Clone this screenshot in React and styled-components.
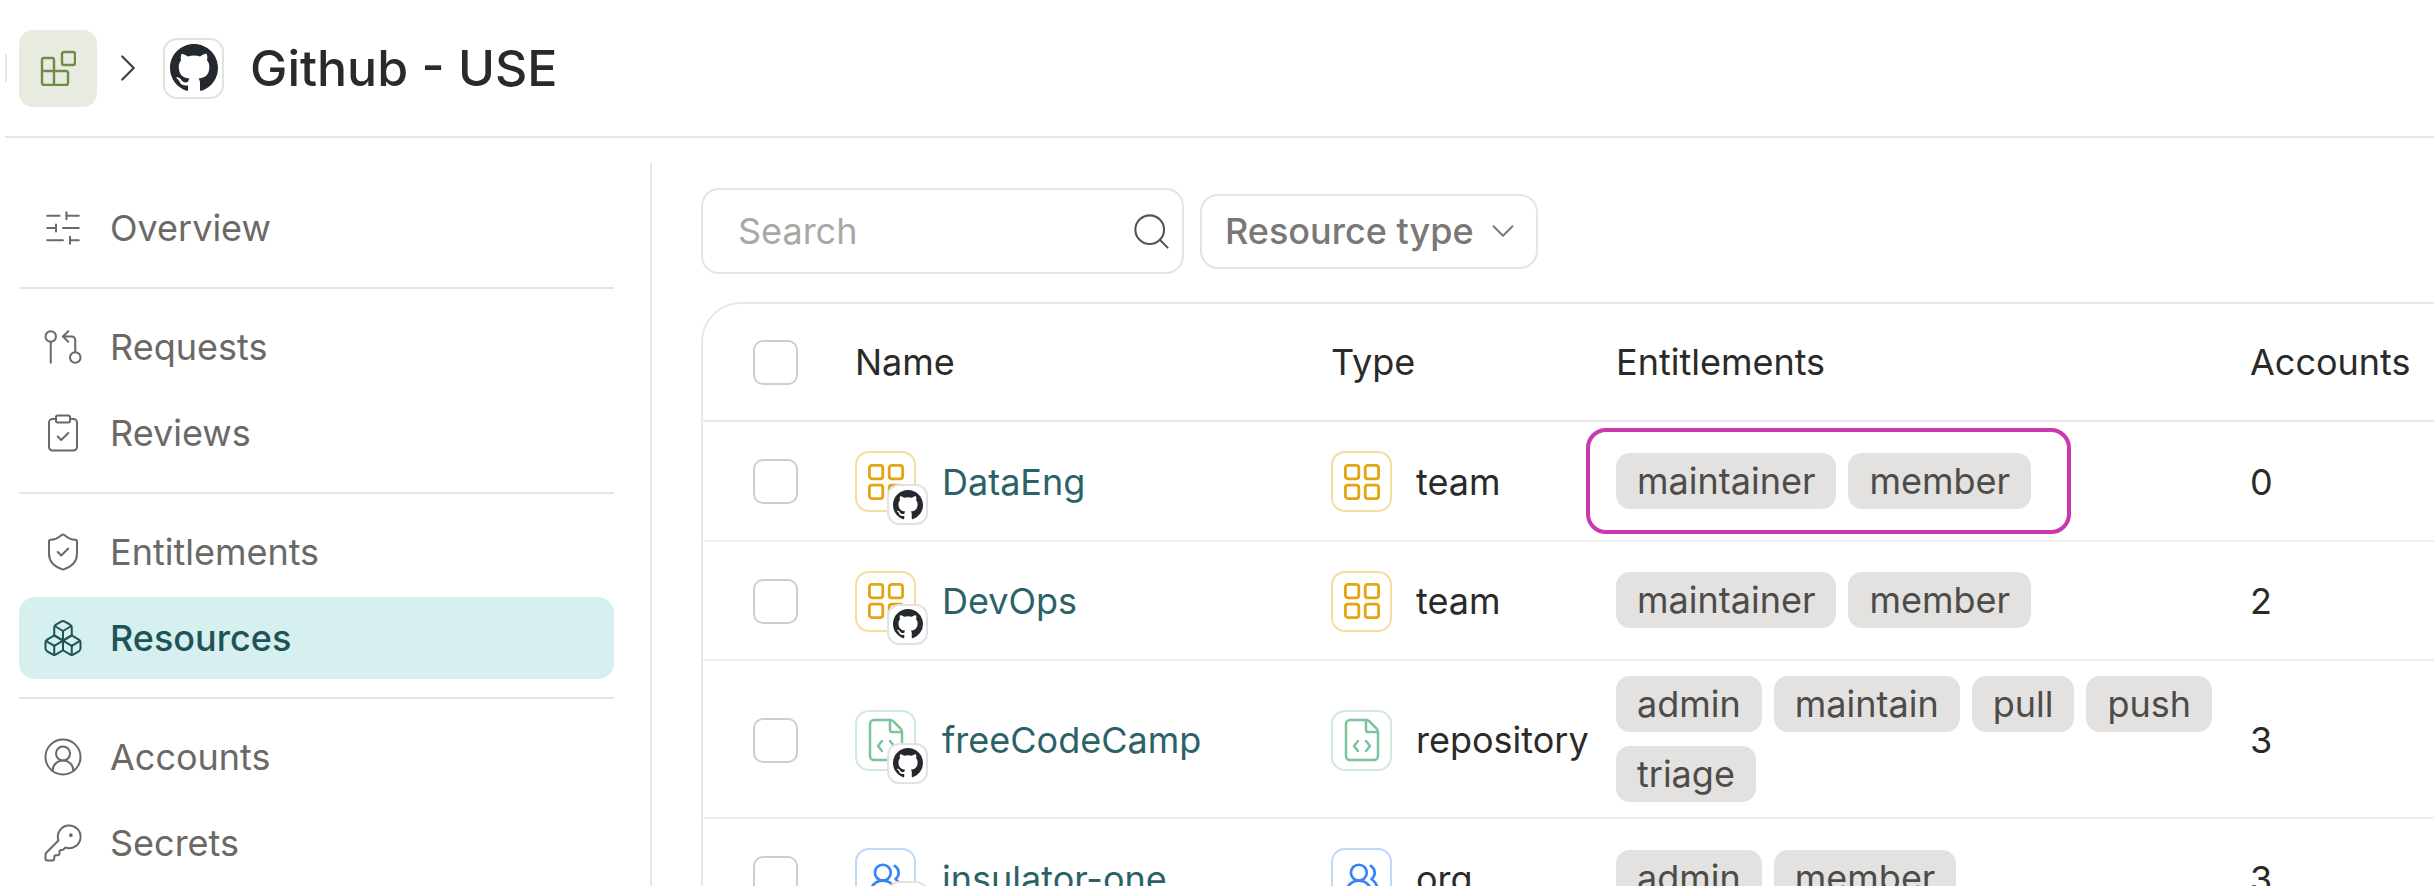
import React from 'react';
import styled, { createGlobalStyle } from 'styled-components';
import {
  SlidersHorizontal,
  GitPullRequestArrow,
  ClipboardCheck,
  ShieldCheck,
  Boxes,
  CircleUserRound,
  KeyRound,
  Search,
  ChevronDown,
  ChevronRight,
  FileCode,
  UsersRound
} from 'lucide-react';

const GITHUB_PATH =
  'M8 0C3.58 0 0 3.58 0 8c0 3.54 2.29 6.53 5.47 7.59.4.07.55-.17.55-.38 0-.19-.01-.82-.01-1.49-2.01.37-2.53-.49-2.69-.94-.09-.23-.48-.94-.82-1.13-.28-.15-.68-.52-.01-.53.63-.01 1.08.58 1.23.82.72 1.21 1.87.87 2.33.66.07-.52.28-.87.51-1.07-1.78-.2-3.64-.89-3.64-3.95 0-.87.31-1.59.82-2.15-.08-.2-.36-1.02.08-2.12 0 0 .67-.21 2.2.82.64-.18 1.32-.27 2-.27.68 0 1.36.09 2 .27 1.53-1.04 2.2-.82 2.2-.82.44 1.1.16 1.92.08 2.12.51.56.82 1.27.82 2.15 0 3.07-1.87 3.75-3.65 3.95.29.25.54.73.54 1.48 0 1.07-.01 1.93-.01 2.2 0 .21.15.46.55.38A8.013 8.013 0 0016 8c0-4.42-3.58-8-8-8z';

const GithubMark = ({ size }) => (
  <svg width={size} height={size} viewBox="0 0 16 16" fill="#24292f">
    <path d={GITHUB_PATH} />
  </svg>
);

const AppsIcon = () => (
  <svg width="36" height="36" viewBox="0 0 36 36" fill="none" stroke="#6f8c47" strokeWidth="2.4" strokeLinejoin="round">
    <rect x="22" y="2" width="13" height="13" rx="2" />
    <path d="M4 8h8a2 2 0 0 1 2 2v11h12a2 2 0 0 1 2 2v10a2 2 0 0 1-2 2H4a2 2 0 0 1-2-2V10a2 2 0 0 1 2-2z" />
    <path d="M2 21h12v14" />
  </svg>
);

const TeamIcon = () => (
  <svg width="36" height="36" viewBox="0 0 36 36" fill="none" stroke="#e3a512" strokeWidth="2.8">
    <rect x="1.4" y="1.4" width="13.4" height="13.4" rx="2.5" />
    <rect x="21.2" y="1.4" width="13.4" height="13.4" rx="2.5" />
    <rect x="1.4" y="21.2" width="13.4" height="13.4" rx="2.5" />
    <rect x="21.2" y="21.2" width="13.4" height="13.4" rx="2.5" />
  </svg>
);

const typeIcons = {
  team: { border: '#f6dca0', icon: <TeamIcon /> },
  repository: { border: '#d0eadb', icon: <FileCode size={48} color="#7cc29a" strokeWidth={1.25} /> },
  org: { border: '#bdd8fb', icon: <UsersRound size={38} color="#3b82f6" strokeWidth={1.7} /> }
};

const navGroups = [
  [{ label: 'Overview', Icon: SlidersHorizontal }],
  [
    { label: 'Requests', Icon: GitPullRequestArrow },
    { label: 'Reviews', Icon: ClipboardCheck }
  ],
  [
    { label: 'Entitlements', Icon: ShieldCheck },
    { label: 'Resources', Icon: Boxes, active: true }
  ],
  [
    { label: 'Accounts', Icon: CircleUserRound },
    { label: 'Secrets', Icon: KeyRound }
  ]
];

const resources = [
  { name: 'DataEng', type: 'team', entitlements: ['maintainer', 'member'], accounts: 0, highlight: true },
  { name: 'DevOps', type: 'team', entitlements: ['maintainer', 'member'], accounts: 2 },
  { name: 'freeCodeCamp', type: 'repository', entitlements: ['admin', 'maintain', 'pull', 'push', 'triage'], accounts: 3 },
  { name: 'insulator-one', type: 'org', entitlements: ['admin', 'member'], accounts: 3 }
];

const TypeBox = ({ type, children }) => (
  <IconBox $border={typeIcons[type].border}>
    {typeIcons[type].icon}
    {children}
  </IconBox>
);

const App = () => (
  <Page>
    <GlobalStyle />
    <Header>
      <HeaderEdge />
      <AppsButton>
        <AppsIcon />
      </AppsButton>
      <ChevronRight size={46} color="#444" strokeWidth={1.2} />
      <LogoBox>
        <GithubMark size={48} />
      </LogoBox>
      <Title>Github - USE</Title>
    </Header>
    <Body>
      <Sidebar>
        {navGroups.map((group, i) => (
          <NavGroup key={i}>
            {group.map(({ label, Icon, active }) => (
              <NavItem key={label} $active={active}>
                <Icon size={42} strokeWidth={1.15} />
                {label}
              </NavItem>
            ))}
          </NavGroup>
        ))}
      </Sidebar>
      <Main>
        <Toolbar>
          <SearchBox>
            <SearchInput placeholder="Search" />
            <Search size={43} color="#55534f" strokeWidth={1.15} />
          </SearchBox>
          <FilterButton>
            Resource type
            <ChevronDown size={38} color="#7a7875" strokeWidth={1.2} />
          </FilterButton>
        </Toolbar>
        <Table>
          <HeadRow>
            <Checkbox />
            <span>Name</span>
            <span>Type</span>
            <span>Entitlements</span>
            <span>Accounts</span>
          </HeadRow>
          {resources.map(r => (
            <Row key={r.name}>
              <Checkbox />
              <NameCell>
                <TypeBox type={r.type}>
                  <Badge>
                    <GithubMark size={30} />
                  </Badge>
                </TypeBox>
                <ResourceLink>{r.name}</ResourceLink>
              </NameCell>
              <TypeCell>
                <TypeBox type={r.type} />
                {r.type}
              </TypeCell>
              <ChipList>
                {r.highlight && <Highlight />}
                {r.entitlements.map(e => (
                  <Chip key={e}>{e}</Chip>
                ))}
              </ChipList>
              <span>{r.accounts}</span>
            </Row>
          ))}
        </Table>
      </Main>
    </Body>
  </Page>
);
export default App;

const GlobalStyle = createGlobalStyle`
  html, body {
    margin: 0;
    background: #fff;
    overflow: hidden;
  }

  * {
    box-sizing: border-box;
  }
`;

const Page = styled.div`
  width: 2434px;
  height: 886px;
  overflow: hidden;
  background: #fff;
  font-family: Inter, 'Liberation Sans', sans-serif;
  font-size: 36px;
  color: #2a2a28;
`;

const Header = styled.header`
  height: 138px;
  margin-left: 5px;
  border-bottom: 2px solid #e5e5e3;
  display: flex;
  align-items: center;
`;

const HeaderEdge = styled.div`
  width: 2px;
  height: 28px;
  margin-right: 12px;
  background: #e8e8e6;
`;

const AppsButton = styled.div`
  width: 78px;
  height: 77px;
  border-radius: 14px;
  background: #e8ece0;
  display: flex;
  align-items: center;
  justify-content: center;
  margin-right: 8px;
`;

const LogoBox = styled.div`
  width: 61px;
  height: 61px;
  margin-left: 12px;
  border: 2px solid #e2e2e0;
  border-radius: 14px;
  display: flex;
  align-items: center;
  justify-content: center;
`;

const Title = styled.h1`
  margin: 0 0 0 26px;
  font-size: 50px;
  font-weight: 500;
  line-height: 1;
  color: #2a2a28;
`;

const Body = styled.div`
  display: flex;
`;

const Sidebar = styled.nav`
  width: 652px;
  height: 748px;
  margin-top: 25px;
  padding: 24px 36px 0 19px;
  border-right: 2px solid #e5e5e3;
  flex-shrink: 0;
`;

const NavGroup = styled.div`
  display: flex;
  flex-direction: column;
  gap: 4px;
  padding-bottom: 18px;
  margin-bottom: 17px;
  border-bottom: 2px solid #e5e5e3;

  &:last-child {
    border-bottom: none;
  }
`;

const NavItem = styled.a`
  height: 82px;
  padding-left: 23px;
  border-radius: 16px;
  display: flex;
  align-items: center;
  gap: 26px;
  font-weight: ${({ $active }) => ($active ? 500 : 400)};
  color: ${({ $active }) => ($active ? '#1f5357' : '#6b6966')};
  background: ${({ $active }) => ($active ? '#d5f0ee' : 'transparent')};
`;

const Main = styled.main`
  flex: 1;
  min-width: 0;
  padding: 50px 0 0 49px;
`;

const Toolbar = styled.div`
  display: flex;
  align-items: center;
  gap: 16px;
`;

const SearchBox = styled.div`
  width: 483px;
  height: 86px;
  padding: 0 9px 0 35px;
  border: 2px solid #e4e4e2;
  border-radius: 18px;
  display: flex;
  align-items: center;
`;

const SearchInput = styled.input`
  flex: 1;
  min-width: 0;
  border: none;
  outline: none;
  padding: 0;
  background: transparent;
  font: 400 36px Inter, 'Liberation Sans', sans-serif;

  &::placeholder {
    color: #a8a8a4;
  }
`;

const FilterButton = styled.div`
  width: 338px;
  height: 75px;
  padding: 0 14px 0 23px;
  border: 2px solid #e4e4e2;
  border-radius: 18px;
  display: flex;
  align-items: center;
  justify-content: space-between;
  font-weight: 500;
  color: #7a7875;
`;

const Table = styled.div`
  width: 1800px;
  margin-top: 28px;
  border: 2px solid #e8e8e6;
  border-radius: 40px 0 0 0;
`;

const columns = `
  display: grid;
  grid-template-columns: 102px 476px 285px 634px 1fr;
  align-items: center;
  padding-left: 50px;
`;

const HeadRow = styled.div`
  ${columns}
  height: 118px;
  border-bottom: 2px solid #e8e8e6;
`;

const Row = styled.div`
  ${columns}
  min-height: 119.5px;
  padding-top: 15px;
  padding-bottom: 13px;
  border-bottom: 2px solid #eeeeec;
`;

const Checkbox = styled.input.attrs(() => ({ type: 'checkbox' }))`
  appearance: none;
  width: 45px;
  height: 45px;
  margin: 0;
  background: #fff;
  border: 2px solid #cfcecc;
  border-radius: 10px;
`;

const NameCell = styled.div`
  display: flex;
  align-items: center;
  gap: 26px;
`;

const IconBox = styled.div`
  position: relative;
  width: 61px;
  height: 61px;
  flex-shrink: 0;
  border: 2px solid ${({ $border }) => $border};
  border-radius: 14px;
  display: flex;
  align-items: center;
  justify-content: center;
`;

const Badge = styled.div`
  position: absolute;
  right: -14px;
  bottom: -15px;
  width: 41px;
  height: 41px;
  background: #fff;
  border: 2px solid #e2e2e0;
  border-radius: 12px;
  display: flex;
  align-items: center;
  justify-content: center;
`;

const ResourceLink = styled.a`
  color: #2b6268;
`;

const TypeCell = styled.div`
  display: flex;
  align-items: center;
  gap: 24px;
`;

const ChipList = styled.div`
  position: relative;
  display: flex;
  flex-wrap: wrap;
  gap: 14px 12px;
  padding-right: 20px;
  padding-bottom: 2px;
`;

const Chip = styled.span`
  height: 56px;
  padding: 0 21px;
  border-radius: 14px;
  background: #e3e2e0;
  color: #4d4c4a;
  font-size: 36px;
  display: flex;
  align-items: center;
`;

const Highlight = styled.div`
  position: absolute;
  left: -30px;
  top: -25px;
  width: 485px;
  height: 106px;
  border: 4px solid #cb38ae;
  border-radius: 20px;
`;
